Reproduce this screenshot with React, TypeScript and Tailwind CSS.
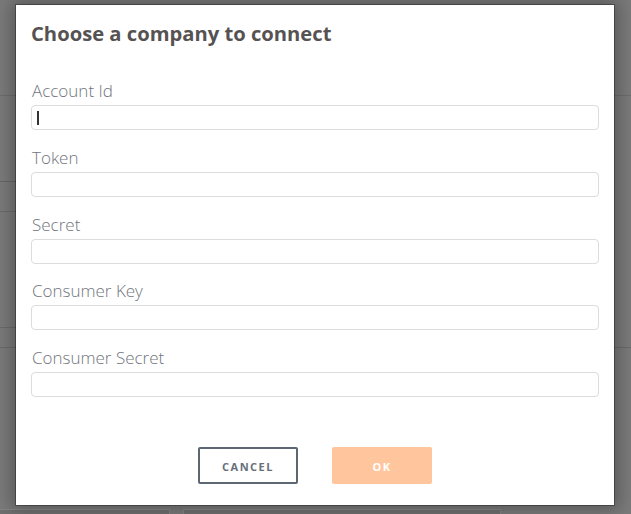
import React from 'react';

const fields = ['Account Id', 'Token', 'Secret', 'Consumer Key', 'Consumer Secret'];

function Backdrop() {
  // faint outline of the page behind the overlay
  return (
    <div className="flex flex-col h-[514px] bg-[#7a7a7a]">
      <div className="flex h-[96px] border-b border-[#6c6c6c]" />
      <div className="flex flex-1">
        <div className="w-[200px] flex flex-col">
          <div className="h-[86px] border-b border-[#666]" />
          <div className="h-[30px] border-b border-[#6a6a6a]" />
          <div className="h-[116px] border-b border-[#6a6a6a]" />
          <div className="h-[20px] border-b border-[#6a6a6a]" />
        </div>
        <div className="flex-1 flex flex-col">
          <div className="h-[252px] border-b border-[#6a6a6a]" />
        </div>
      </div>
      <div className="flex gap-[13px] h-[5px]">
        <div className="w-[170px] bg-[#6f6f6f] border-t border-r border-[#858585]" />
        <div className="w-[318px] bg-[#6f6f6f] border-t border-l border-r border-[#858585]" />
      </div>
    </div>
  );
}

export default function App() {
  return (
    <div className="relative w-[631px] h-[514px] overflow-hidden font-['Open_Sans',sans-serif]">
      <Backdrop />
      <div className="absolute left-[16px] top-[5px] w-[598px] h-[500px] bg-white shadow-[0_0_0_1px_rgba(0,0,0,0.3),0_0_16px_4px_rgba(0,0,0,0.3)] px-[15px] pt-[14px] flex flex-col">
        <h2 className="text-[20.2px] leading-[28px] font-bold text-[#565252]">
          Choose a company to connect
        </h2>
        <div className="mt-[32px] flex flex-col gap-[15.75px]">
          {fields.map((label, i) => (
            <div key={label} className="flex flex-col">
              <label className="text-[17px] leading-[24px] font-light text-[#6f757d] pl-[1px]">{label}</label>
              <div className="mt-[2px] h-[25px] rounded-[4px] border border-[#dcdcdc] flex items-center px-[5px]">
                {i === 0 && <span className="w-[2px] h-[14px] bg-[#333]" />}
              </div>
            </div>
          ))}
        </div>
        <div className="mt-[50px] flex justify-center gap-[34px]">
          <button className="w-[100px] h-[37px] pt-[3px] border-2 border-[#5d6771] rounded-[2px] text-[11px] font-bold tracking-[1.5px] text-[#66707a] bg-white">
            CANCEL
          </button>
          <button className="w-[100px] h-[37px] pt-[3px] rounded-[2px] bg-[#ffc69e] text-[11px] font-bold tracking-[1.5px] text-white">
            OK
          </button>
        </div>
      </div>
    </div>
  );
}
